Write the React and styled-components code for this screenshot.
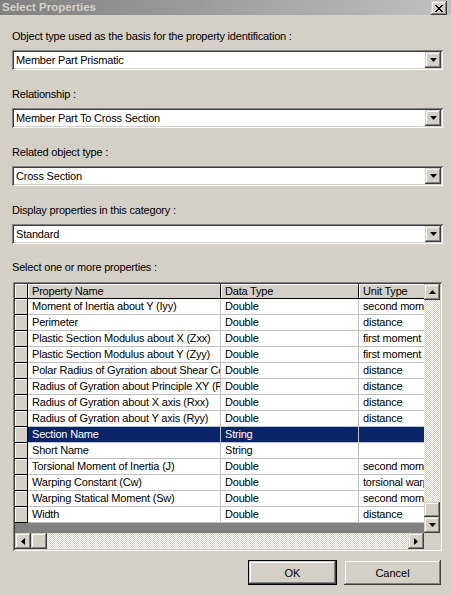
import React from "react";
import styled, { createGlobalStyle, css } from "styled-components";

const GlobalStyle = createGlobalStyle`
    body {
        margin: 0;
        background: #d4d0c8;
        font-family: "Liberation Sans", Arial, sans-serif;
        font-size: 11px;
        letter-spacing: -0.2px;
        color: #000;
    }
`;

const raised = css`
    background: #d4d0c8;
    box-shadow: inset -1px -1px #404040, inset 1px 1px #d4d0c8,
        inset -2px -2px #808080, inset 2px 2px #fff;
`;

const sunken = css`
    box-shadow: inset 1px 1px #808080, inset -1px -1px #fff,
        inset 2px 2px #404040, inset -2px -2px #d4d0c8;
`;

const Window = styled.div`
    width: 451px;
    height: 595px;
    background: #d4d0c8;
    display: flex;
    flex-direction: column;
    overflow: hidden;
`;

const TitleBar = styled.div`
    height: 15px;
    display: flex;
    align-items: center;
    justify-content: space-between;
    padding: 0 4px 0 2px;
    background: linear-gradient(to right, #808080, #c0c0c0);
`;

const Title = styled.span`
    font-weight: 700;
    color: #d4d0c8;
    font-size: 11.5px;
    letter-spacing: 0;
    line-height: 15px;
`;

const CloseButton = styled.div`
    ${raised};
    width: 16px;
    height: 14px;
    margin-top: 1px;
    display: flex;
    align-items: center;
    justify-content: center;
`;

const Content = styled.div`
    display: flex;
    flex-direction: column;
    padding: 15px 8px 0 12px;
`;

const Field = styled.div`
    display: flex;
    flex-direction: column;
    gap: 7px;
    margin-bottom: ${(p) => p.$gap ?? 18}px;
`;

const Label = styled.div`
    line-height: 13px;
    white-space: nowrap;
    margin-bottom: ${(p) => p.$mb ?? 0}px;
`;

const Combo = styled.div`
    ${sunken};
    height: 20px;
    background: #fff;
    display: flex;
    align-items: center;
    padding: 2px;
    box-sizing: border-box;
`;

const ComboText = styled.span`
    flex: 1;
    padding-left: 2px;
    line-height: 16px;
`;

const ArrowButton = styled.div`
    ${raised};
    width: 16px;
    height: 16px;
    flex: none;
    display: flex;
    align-items: center;
    justify-content: center;
`;

const GridBox = styled.div`
    ${sunken};
    margin-left: 1px;
    width: 429px;
    padding: 2px;
    box-sizing: border-box;
    display: flex;
    flex-direction: column;
`;

const GridTop = styled.div`
    display: flex;
`;

const Viewport = styled.div`
    width: 409px;
    height: 249px;
    overflow: hidden;
    background: #808080;
`;

const Row = styled.div`
    display: flex;
    width: 500px;
    height: ${(p) => (p.$header ? 15 : 16)}px;
`;

const RowHead = styled.div`
    width: 13px;
    flex: none;
    box-sizing: border-box;
    background: #d4d0c8;
    border-right: 1px solid #000;
    border-bottom: 1px solid #000;
    box-shadow: inset 1px 1px #fff;
`;

const Cell = styled.div`
    width: ${(p) => p.$w}px;
    flex: none;
    box-sizing: border-box;
    padding-left: 4px;
    white-space: nowrap;
    overflow: hidden;
    line-height: 15px;
    background: ${(p) => (p.$sel ? "#0a246a" : "#fff")};
    color: ${(p) => (p.$sel ? "#fff" : "#000")};
    border-right: 1px solid #c0c0c0;
    border-bottom: 1px solid #c0c0c0;
`;

const HeadCell = styled.div`
    width: ${(p) => p.$w}px;
    flex: none;
    box-sizing: border-box;
    padding-left: 4px;
    white-space: nowrap;
    overflow: hidden;
    line-height: 14px;
    background: #d4d0c8;
    border-right: 1px solid #000;
    border-bottom: 1px solid #000;
    box-shadow: inset 1px 1px #fff;
`;

const track = css`
    background: repeating-conic-gradient(#d4d0c8 0 25%, #fff 0 50%) 0 0 / 2px 2px;
`;

const VScroll = styled.div`
    width: 16px;
    height: 249px;
    display: flex;
    flex-direction: column;
`;

const Track = styled.div`
    ${track};
    flex: 1;
`;

const Thumb = styled.div`
    ${raised};
    flex: none;
    width: 16px;
    height: ${(p) => (p.$horizontal ? 16 : 15)}px;
`;

const HScroll = styled.div`
    display: flex;
    height: 16px;
`;

const HTrack = styled.div`
    ${track};
    width: ${(p) => p.$w}px;
    flex: none;
`;

const Corner = styled.div`
    width: 16px;
    background: #d4d0c8;
`;

const ButtonRow = styled.div`
    display: flex;
    justify-content: flex-end;
    gap: 7px;
    margin-top: 9px;
    padding-right: 2px;
`;

const Button = styled.div`
    ${raised};
    width: ${(p) => p.$w}px;
    height: 25px;
    box-sizing: border-box;
    display: flex;
    align-items: center;
    justify-content: center;
    letter-spacing: 0;
    ${(p) =>
        p.$default &&
        css`
            border: 1px solid #000;
        `}
`;

const Arrow = ({ dir }) => {
    const pts = {
        down: "0,0 7,0 3.5,4",
        up: "0,4 7,4 3.5,0",
        left: "4,0 4,7 0,3.5",
        right: "0,0 0,7 4,3.5",
    }[dir];
    const horiz = dir === "left" || dir === "right";
    return (
        <svg width={horiz ? 4 : 7} height={horiz ? 7 : 4} viewBox={horiz ? "0 0 4 7" : "0 0 7 4"}>
            <polygon points={pts} fill="#000" />
        </svg>
    );
};

const fields = [
    ["Object type used as the basis for the property identification :", "Member Part Prismatic"],
    ["Relationship :", "Member Part To Cross Section"],
    ["Related object type :", "Cross Section"],
    ["Display properties in this category :", "Standard"],
];

const rows = [
    ["Moment of Inertia about Y (Iyy)", "Double", "second moment of area"],
    ["Perimeter", "Double", "distance"],
    ["Plastic Section Modulus about X (Zxx)", "Double", "first moment of area"],
    ["Plastic Section Modulus about Y (Zyy)", "Double", "first moment of area"],
    ["Polar Radius of Gyration about Shear Center", "Double", "distance"],
    ["Radius of Gyration about Principle XY (Rxy)", "Double", "distance"],
    ["Radius of Gyration about X axis (Rxx)", "Double", "distance"],
    ["Radius of Gyration about Y axis (Ryy)", "Double", "distance"],
    ["Section Name", "String", ""],
    ["Short Name", "String", ""],
    ["Torsional Moment of Inertia (J)", "Double", "second moment of area"],
    ["Warping Constant (Cw)", "Double", "torsional warping"],
    ["Warping Statical Moment (Sw)", "Double", "second moment of area"],
    ["Width", "Double", "distance"],
];

const widths = [193, 138, 120];

export default function App() {
    return (
        <Window>
            <GlobalStyle />
            <TitleBar>
                <Title>Select Properties</Title>
                <CloseButton>
                    <svg width="8" height="7" viewBox="0 0 8 7" shapeRendering="crispEdges">
                        <path d="M0 0h2v1h-2zM6 0h2v1h-2zM1 1h2v1h-2zM5 1h2v1h-2zM2 2h4v1h-4zM3 3h2v1h-2zM2 4h4v1h-4zM1 5h2v1h-2zM5 5h2v1h-2zM0 6h2v1h-2zM6 6h2v1h-2z" fill="#000" />
                    </svg>
                </CloseButton>
            </TitleBar>
            <Content>
                {fields.map(([label, value], i) => (
                    <Field key={label} $gap={i === 3 ? 17 : 18}>
                        <Label>{label}</Label>
                        <Combo>
                            <ComboText>{value}</ComboText>
                            <ArrowButton>
                                <Arrow dir="down" />
                            </ArrowButton>
                        </Combo>
                    </Field>
                ))}
                <Label $mb={8}>Select one or more properties :</Label>
                <GridBox>
                    <GridTop>
                        <Viewport>
                            <Row $header>
                                <RowHead />
                                <HeadCell $w={widths[0]}>Property Name</HeadCell>
                                <HeadCell $w={widths[1]}>Data Type</HeadCell>
                                <HeadCell $w={widths[2]}>Unit Type</HeadCell>
                            </Row>
                            {rows.map(([name, type, unit]) => {
                                const sel = name === "Section Name";
                                return (
                                    <Row key={name}>
                                        <RowHead />
                                        <Cell $w={widths[0]} $sel={sel}>{name}</Cell>
                                        <Cell $w={widths[1]} $sel={sel}>{type}</Cell>
                                        <Cell $w={widths[2]} $sel={sel}>{unit}</Cell>
                                    </Row>
                                );
                            })}
                        </Viewport>
                        <VScroll>
                            <ArrowButton>
                                <Arrow dir="up" />
                            </ArrowButton>
                            <Track />
                            <Thumb />
                            <ArrowButton>
                                <Arrow dir="down" />
                            </ArrowButton>
                        </VScroll>
                    </GridTop>
                    <HScroll>
                        <ArrowButton>
                            <Arrow dir="left" />
                        </ArrowButton>
                        <Thumb $horizontal />
                        <HTrack $w={361} />
                        <ArrowButton>
                            <Arrow dir="right" />
                        </ArrowButton>
                        <Corner />
                    </HScroll>
                </GridBox>
                <ButtonRow>
                    <Button $w={89} $default>OK</Button>
                    <Button $w={97}>Cancel</Button>
                </ButtonRow>
            </Content>
        </Window>
    );
}
